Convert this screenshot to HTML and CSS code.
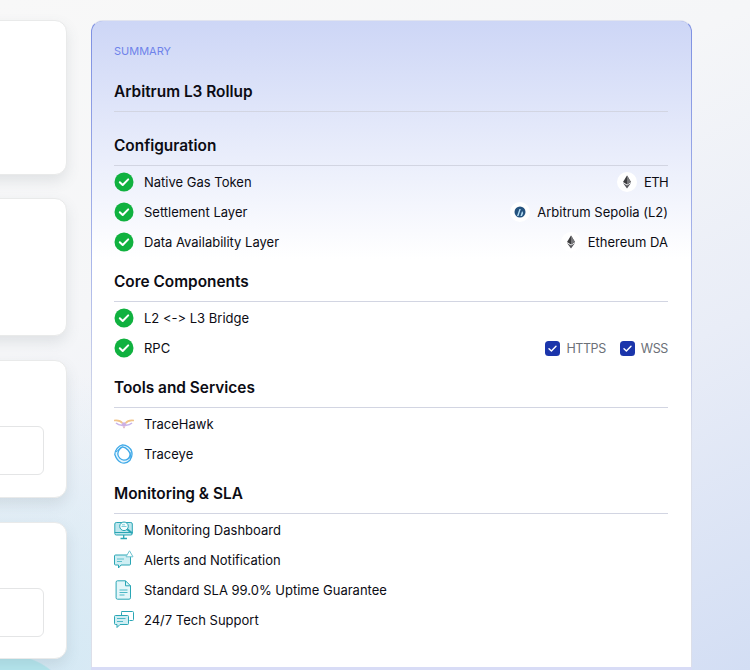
FILE: index.html
```html
<!DOCTYPE html>
<html lang="en">
<head>
<meta charset="utf-8">
<title>Summary</title>
<link rel="stylesheet" href="styles.css">
</head>
<body>
<svg class="defs" width="0" height="0" aria-hidden="true">
  <symbol id="check" viewBox="0 0 20 20">
    <circle cx="10" cy="10" r="9.5" fill="#10b13f"/>
    <path d="M5.800 10.200l2.900 2.800 5.500-5.600" fill="none" stroke="#fff" stroke-width="2" stroke-linecap="round" stroke-linejoin="round"/>
  </symbol>
  <symbol id="eth" viewBox="0 0 20 20">
    <path d="M10 3.500l-4 6.600 4 2.300 4-2.300z" fill="#3c3c3e"/>
    <path d="M10 3.500v8.900l4-2.300z" fill="#77777a"/>
    <path d="M6 11l4 5.600 4-5.600-4 2.400z" fill="#55555a"/>
  </symbol>
  <symbol id="tick" viewBox="0 0 15 15">
    <rect width="15" height="15" rx="3.500" fill="#1b35ab"/>
    <path d="M4 7.800l2.400 2.300 4.600-4.800" fill="none" stroke="#fff" stroke-width="1.400" stroke-linecap="round" stroke-linejoin="round"/>
  </symbol>
</svg>
<div class="page">
  <div class="forms">
    <div class="card card-a"></div>
    <div class="card card-b"></div>
    <div class="card card-c"><div class="field"></div></div>
    <div class="card card-c"><div class="field"></div></div>
  </div>
  <main class="panel">
    <p class="eyebrow">SUMMARY</p>
    <h1 class="title">Arbitrum L3 Rollup</h1>

    <section class="group group-first">
      <h2 class="heading">Configuration</h2>
      <ul class="rows">
        <li class="row"><svg class="ico"><use href="#check"/></svg><span class="label">Native Gas Token</span>
          <span class="value"><span class="coin"><svg class="coin-ico"><use href="#eth"/></svg></span><span class="short">ETH</span></span></li>
        <li class="row"><svg class="ico"><use href="#check"/></svg><span class="label">Settlement Layer</span>
          <span class="value"><span class="coin">
            <svg class="coin-ico" viewBox="0 0 20 20"><circle cx="10" cy="10" r="5.500" fill="#24527e"/><path d="M7 14l2.400-7h1.400l-2.300 7zM10.400 14l1.700-5 1.100 2-1.200 3z" fill="#b5def5"/></svg>
          </span>Arbitrum Sepolia (L2)</span></li>
        <li class="row"><svg class="ico"><use href="#check"/></svg><span class="label">Data Availability Layer</span>
          <span class="value"><span class="coin"><svg class="coin-ico"><use href="#eth"/></svg></span>Ethereum DA</span></li>
      </ul>
    </section>

    <section class="group">
      <h2 class="heading">Core Components</h2>
      <ul class="rows">
        <li class="row"><svg class="ico"><use href="#check"/></svg><span class="label">L2 &lt;-&gt; L3 Bridge</span></li>
        <li class="row"><svg class="ico"><use href="#check"/></svg><span class="label">RPC</span>
          <span class="protos">
            <span class="proto"><svg class="tick"><use href="#tick"/></svg>HTTPS</span>
            <span class="proto"><svg class="tick"><use href="#tick"/></svg>WSS</span>
          </span></li>
      </ul>
    </section>

    <section class="group">
      <h2 class="heading">Tools and Services</h2>
      <ul class="rows">
        <li class="row">
          <svg class="ico" viewBox="0 0 20 20" fill="none"><path d="M0 6.500c3-.4 6.500 0 8.500 2.800M20 6.500c-3-.4-6.500 0-8.500 2.800" stroke="#f0c48a" stroke-width="1.600"/><path d="M2 9c2 1.800 4 2.400 6.500 2.200M18 9c-2 1.800-4 2.400-6.500 2.200" stroke="#c8b4ec" stroke-width="1.600"/><circle cx="10" cy="10.500" r="2.200" fill="#cdb0e2"/><path d="M8.800 12.800l1.200 2 1.200-2z" fill="#dda9bd"/></svg>
          <span class="label">TraceHawk</span></li>
        <li class="row">
          <svg class="ico" viewBox="0 0 20 20" fill="none" stroke="#3fa9e8" stroke-width="1.300"><path d="M8.500 .8c4 .2 8 3 9.200 6.700.8 3-.2 6.500-1.700 8.700-2.500 2.600-6 3.400-9 2.300C4 17 1.800 13.500 .8 10.500 .8 6.500 4.500 1.500 8.500 .8z" fill="#e6f5fd"/><path d="M8.500 2.800C6 4 4 7 3.800 10c.2 3 3 6 6 6.200 3 0 5.600-2 6.300-5.200.2-3.200-3.600-7.500-7.600-8.200z" fill="#fff"/><path d="M2 8l6-5M16 15l1-7" stroke-width="1"/></svg>
          <span class="label">Traceye</span></li>
      </ul>
    </section>

    <section class="group">
      <h2 class="heading">Monitoring &amp; SLA</h2>
      <ul class="rows">
        <li class="row">
          <svg class="ico" viewBox="0 0 20 20" fill="none" stroke="#2aa6b5" stroke-width="1"><rect x=".8" y="2.500" width="17.500" height="12.500" rx="1.500" fill="#bfe7ee"/><path d="M.8 12.500h17.500" /><path d="M6.500 18.500h6.500M9.700 15v3.500" stroke-width="1.300"/><circle cx="10" cy="6.300" r="4.300" fill="#f4fcfd"/><path d="M13.200 9.300l5 4" stroke-width="2"/><path d="M7.500 6.500h5M8 4.800h3" stroke="#7bcdd8"/></svg>
          <span class="label">Monitoring Dashboard</span></li>
        <li class="row">
          <svg class="ico" viewBox="0 0 20 20" fill="none" stroke="#2aa6b5" stroke-width="1"><path d="M1.500 5h14a1 1 0 0 1 1 1v8a1 1 0 0 1-1 1H7l-2.500 3v-3H1.500a1 1 0 0 1-1-1V6a1 1 0 0 1 1-1z" fill="#cfeef3"/><path d="M3 9h7M3 11.500h5" stroke="#5cc0cc"/><path d="M15.500 .8l3.500 6h-7z" fill="#fff" stroke="#6fc3d0"/></svg>
          <span class="label">Alerts and Notification</span></li>
        <li class="row">
          <svg class="ico" viewBox="0 0 20 20" fill="none" stroke="#2aa6b5" stroke-width="1"><path d="M3.500 .8h8l5 5v12a1.400 1.400 0 0 1-1.400 1.400H3.500a1.400 1.400 0 0 1-1.400-1.400V2.200A1.400 1.400 0 0 1 3.500 .8z" fill="#e3f6f9"/><path d="M11.500 .8v5h5"/><path d="M5.500 10h8M5.500 12.500h8M5.500 15h5" stroke="#4db8c6"/></svg>
          <span class="label">Standard SLA 99.0% Uptime Guarantee</span></li>
        <li class="row">
          <svg class="ico" viewBox="0 0 20 20" fill="none" stroke="#2aa6b5" stroke-width="1"><path d="M7.500 1.500h11a1 1 0 0 1 1 1v7a1 1 0 0 1-1 1h-3" fill="#fff"/><path d="M7.500 5V2.500a1 1 0 0 1 1-1"/><path d="M1.500 5.500h12a1 1 0 0 1 1 1v7a1 1 0 0 1-1 1H6l-3 3v-3H1.500a1 1 0 0 1-1-1v-7a1 1 0 0 1 1-1z" fill="#cfeef3"/><path d="M3 8.500h8.500M3 11.500h6" stroke="#4db8c6"/></svg>
          <span class="label">24/7 Tech Support</span></li>
      </ul>
    </section>
  </main>
</div>
</body>
</html>
```

FILE: styles.css
```css
* { box-sizing: border-box; }
html, body { margin: 0; height: 670px; overflow: hidden; }
body {
  font-family: Inter, "Liberation Sans", sans-serif;
  font-feature-settings: "calt" 0;
  color: #0c0c14;
  background:
    radial-gradient(circle 65px at 10px 720px, #b5e6ee 0 98%, transparent),
    radial-gradient(ellipse 420px 300px at 0 670px, #d3e9f4, rgba(216,236,245,0)),
    linear-gradient(155deg, #f8f8f8 0%, #f5f6f8 35%, #e9edf7 65%, #d3def4 100%);
}
.defs { position: absolute; }
.page { display: flex; align-items: flex-start; gap: 24px; margin-left: -100px; padding-top: 20px; }
.forms { width: 167px; flex: none; display: flex; flex-direction: column; gap: 24px; }
.card {
  background: #fff;
  border: 1px solid #e9eaea;
  border-radius: 12px;
  box-shadow: 0 6px 14px rgba(80, 90, 100, .13);
}
.card-a { height: 155px; margin-bottom: -1px; }
.card-b { height: 138px; }
.card-c { height: 137.5px; padding: 65px 22px 0 0; }
.field { height: 49px; border: 1px solid #e4e5e6; border-radius: 6px; }
.panel {
  width: 601px;
  height: 647px;
  flex: none;
  padding: 22px 23px 0 22px;
  border: 1px solid transparent;
  border-top-color: #e1e4ef;
  border-bottom: 0;
  border-radius: 12px 12px 0 0;
  background:
    linear-gradient(#cdd6f6 0, #fff 238px) padding-box,
    linear-gradient(#7d90e2 0, #a9b6ea 240px, #dcdfe9 420px) border-box;
  box-shadow: 0 3px 0 #d8dcf6;
}
.eyebrow { margin: 0; font-size: 11px; line-height: 16px; color: #6f83ea; font-weight: 400; }
.title {
  margin: 21px 0 0;
  padding-bottom: 7px;
  border-bottom: 1px solid #d2d5e2;
  font-size: 15.4px;
  line-height: 24px;
  font-weight: 600;
}
.group { margin-top: 18px; }
.group-first { margin-top: 22px; }
.heading {
  margin: 0;
  padding-bottom: 7px;
  border-bottom: 1px solid #d2d5e2;
  font-size: 15.4px;
  line-height: 24px;
  font-weight: 600;
}
.rows { list-style: none; margin: 6px 0 0; padding: 0; display: flex; flex-direction: column; gap: 10px; }
.row { display: flex; align-items: center; height: 20px; font-size: 13px; }
.ico { width: 20px; height: 20px; flex: none; margin-right: 10px; }
.label { flex: none; }
.value { margin-left: auto; display: flex; align-items: center; }
.short { letter-spacing: -.6px; }
.coin {
  width: 20px; height: 20px; border-radius: 50%; background: #fff;
  display: flex; margin-right: 7px;
}
.coin-ico { width: 20px; height: 20px; }
.protos { margin-left: auto; display: flex; gap: 14px; font-size: 12.5px; letter-spacing: -.4px; color: #6c7078; }
.proto { display: flex; align-items: center; gap: 6px; }
.tick { width: 15px; height: 15px; }
```
